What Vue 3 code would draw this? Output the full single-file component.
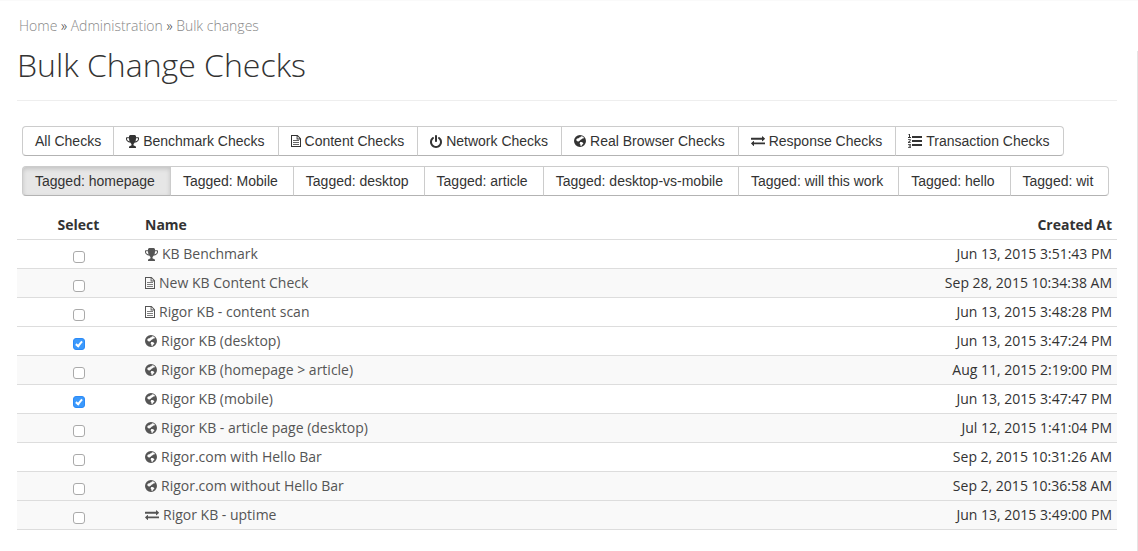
<script setup>
import { ref } from 'vue'

const icons = {
  trophy: {
    w: 13, h: 13, box: '64 128 1664 1536',
    d: 'M522 883q-74-162-74-371h-256v96q0 78 94.5 162t235.5 113zm1078-275v-96h-256q0 209-74 371 141-29 235.5-113t94.5-162zm128-128v128q0 71-41.5 143t-112 130-173 97.5-215.5 44.5q-42 54-95 95-38 34-52.5 72.5t-14.5 89.5q0 54 30.5 91t97.5 37q75 0 133.5 45.5t58.5 114.5v64q0 14-9 23t-23 9h-832q-14 0-23-9t-9-23v-64q0-69 58.5-114.5t133.5-45.5q67 0 97.5-37t30.5-91q0-51-14.5-89.5t-52.5-72.5q-53-41-95-95-113-5-215.5-44.5t-173-97.5-112-130-41.5-143v-128q0-40 28-68t68-28h288v-96q0-66 47-113t113-47h576q66 0 113 47t47 113v96h288q40 0 68 28t28 68z'
  },
  file: {
    w: 10, h: 12, box: '0 0 10 12',
    d: 'M0 0H6.6L10 3.4V12H0ZM1 1V11H9V4.4H5.6V1ZM6.5 1.3V3.5H8.7ZM2 5.3H8V6.1H2ZM2 7.2H8V8H2ZM2 9H8V9.8H2Z'
  },
  power: {
    w: 12, h: 13, box: '128 0 1536 1664',
    d: 'M1664 896q0 156-61 298t-164 245-245 164-298 61-298-61-245-164-164-245-61-298q0-182 80.5-343t226.5-270q43-32 95.5-25t83.5 50q32 42 24.5 94.5t-49.5 84.5q-98 74-151.5 181t-53.5 228q0 104 40.5 198.5t109.5 163.5 163.5 109.5 198.5 40.5 198.5-40.5 163.5-109.5 109.5-163.5 40.5-198.5q0-121-53.5-228t-151.5-181q-42-32-49.5-84.5t24.5-94.5q31-43 84-50t95 25q146 109 226.5 270t80.5 343zm-640-768v640q0 52-38 90t-90 38-90-38-38-90v-640q0-52 38-90t90-38 90 38 38 90z'
  },
  globe: {
    w: 12, h: 12, box: '0 0 12 12',
    d: 'M6 0A6 6 0 1 1 6 12A6 6 0 1 1 6 0ZM7 1.2L8.6 1.6L10 2.8L9.4 3.6L8.4 3.4L7.6 4.2L6.6 4.8L5.8 5.8L4.8 6L4.4 6.8L3.4 6.2L2.4 5.4L2.4 4.2L3.2 3.4L4.6 3.2L5.2 2.4L6.4 2.2ZM6.2 7L7.6 7L9 7.8L9.4 8.6L8.4 9.6L7.6 10.8L6.6 11L6.4 9.6L5.6 8.4Z'
  },
  exchange: {
    w: 14, h: 10, box: '0 256 1792 1376',
    d: 'M1792 1184v192q0 13-9.5 22.5t-22.5 9.5h-1376v192q0 13-9.5 22.5t-22.5 9.5q-12 0-24-10l-319-320q-9-9-9-22 0-14 9-23l320-320q9-9 23-9 13 0 22.5 9.5t9.5 22.5v192h1376q13 0 22.5 9.5t9.5 22.5zm0-544q0 14-9 23l-320 320q-9 9-23 9-13 0-22.5-9.5t-9.5-22.5v-192h-1376q-13 0-22.5-9.5t-9.5-22.5v-192q0-13 9.5-22.5t22.5-9.5h1376v-192q0-14 9-23t23-9q12 0 24 10l319 319q9 9 9 23z'
  },
  list: {
    w: 14, h: 14, box: '0 0 14 14',
    d: 'M4 2H14V4H4ZM4 6H14V8H4ZM4 10H14V12H4ZM1 0H2V3H3V4H0V3H1V1H0.4V0.5ZM0 5H2.6V7L1.2 8.2H2.8V9H0V8L1.8 6.6V5.8H0ZM0 10H2.8V11.6L2.3 12L2.8 12.5V14H0V13.2H1.8V12.4H0.8V11.6H1.8V10.8H0Z'
  }
}

const types = [
  { label: 'All Checks' },
  { label: 'Benchmark Checks', icon: 'trophy' },
  { label: 'Content Checks', icon: 'file' },
  { label: 'Network Checks', icon: 'power' },
  { label: 'Real Browser Checks', icon: 'globe' },
  { label: 'Response Checks', icon: 'exchange' },
  { label: 'Transaction Checks', icon: 'list' }
]

const tags = ['homepage', 'Mobile', 'desktop', 'article', 'desktop-vs-mobile', 'will this work', 'hello', 'wit']
const activeTag = ref('homepage')

const checks = ref([
  { icon: 'trophy', name: 'KB Benchmark', created: 'Jun 13, 2015 3:51:43 PM', selected: false },
  { icon: 'file', name: 'New KB Content Check', created: 'Sep 28, 2015 10:34:38 AM', selected: false, shaded: true },
  { icon: 'file', name: 'Rigor KB - content scan', created: 'Jun 13, 2015 3:48:28 PM', selected: false },
  { icon: 'globe', name: 'Rigor KB (desktop)', created: 'Jun 13, 2015 3:47:24 PM', selected: true },
  { icon: 'globe', name: 'Rigor KB (homepage > article)', created: 'Aug 11, 2015 2:19:00 PM', selected: false, shaded: true },
  { icon: 'globe', name: 'Rigor KB (mobile)', created: 'Jun 13, 2015 3:47:47 PM', selected: true },
  { icon: 'globe', name: 'Rigor KB - article page (desktop)', created: 'Jul 12, 2015 1:41:04 PM', selected: false, shaded: true },
  { icon: 'globe', name: 'Rigor.com with Hello Bar', created: 'Sep 2, 2015 10:31:26 AM', selected: false },
  { icon: 'globe', name: 'Rigor.com without Hello Bar', created: 'Sep 2, 2015 10:36:58 AM', selected: false, shaded: true },
  { icon: 'exchange', name: 'Rigor KB - uptime', created: 'Jun 13, 2015 3:49:00 PM', selected: false, shaded: true }
])
</script>

<template>
  <div class="page">
    <main class="content">
      <nav class="breadcrumb" aria-label="Breadcrumb">
        <a href="#">Home</a> » <a href="#">Administration</a> » <a href="#">Bulk changes</a>
      </nav>
      <h1>Bulk Change Checks</h1>

      <div class="groups">
        <div class="group types">
          <button v-for="t in types" :key="t.label" type="button" class="btn">
            <svg v-if="t.icon" class="icon" :width="icons[t.icon].w" :height="icons[t.icon].h" :viewBox="icons[t.icon].box" preserveAspectRatio="none" aria-hidden="true">
              <path fill-rule="evenodd" :d="icons[t.icon].d" />
            </svg>
            <span>{{ t.label }}</span>
          </button>
        </div>
        <div class="group tags">
          <button v-for="t in tags" :key="t" type="button" class="btn" :class="{ active: t === activeTag }" @click="activeTag = t">Tagged: {{ t }}</button>
        </div>
      </div>

      <table>
        <thead>
          <tr>
            <th class="select">Select</th>
            <th>Name</th>
            <th class="created">Created At</th>
          </tr>
        </thead>
        <tbody>
          <tr v-for="c in checks" :key="c.name" :class="{ shaded: c.shaded }">
            <td class="select"><input v-model="c.selected" type="checkbox" :aria-label="c.name" /></td>
            <td>
              <a href="#" class="name">
                <svg class="icon" :width="icons[c.icon].w" :height="icons[c.icon].h" :viewBox="icons[c.icon].box" preserveAspectRatio="none" aria-hidden="true">
                  <path fill-rule="evenodd" :d="icons[c.icon].d" />
                </svg>
                <span>{{ c.name }}</span>
              </a>
            </td>
            <td class="created">{{ c.created }}</td>
          </tr>
        </tbody>
      </table>
    </main>
    <div class="edge"></div>
  </div>
</template>

<style>
body {
  background: #fff;
}
</style>

<style scoped>
.page {
  box-sizing: border-box;
  display: flex;
  min-height: 100vh;
  border-top: 1px solid #fafafa;
  color: #333;
  font: 14px/20px 'Open Sans', sans-serif;
}
.content {
  flex: 1;
  padding: 15px 20px 20px 17px;
}
.edge {
  width: 1px;
  margin-top: 50px;
  background: #e5e5e5;
}
.breadcrumb {
  padding-left: 2px;
  font-weight: 300;
}
.breadcrumb a {
  color: #888;
  text-decoration: none;
}
h1 {
  margin: 9px 0 25px;
  padding-bottom: 15px;
  border-bottom: 1px solid #eee;
  font-size: 32px;
  line-height: 40px;
  font-weight: 300;
}
.groups {
  display: flex;
  flex-direction: column;
  gap: 10px;
  padding-left: 5px;
}
.group {
  display: flex;
}
.btn {
  display: flex;
  align-items: center;
  gap: 4px;
  margin: 0 0 0 -1px;
  padding: 4px 12px;
  border: 1px solid #ccc;
  border-bottom-color: #b3b3b3;
  background: #fff;
  color: #333;
  font: 14px/20px 'Liberation Sans', Arial, sans-serif;
  white-space: nowrap;
}
.types .btn + .btn {
  padding-right: 13px;
}
.tags .btn {
  padding-right: 15px;
}
.btn:first-child {
  margin-left: 0;
  border-radius: 4px 0 0 4px;
}
.btn:last-child {
  border-radius: 0 4px 4px 0;
}
.btn.active {
  background: #e6e6e6;
  box-shadow: inset 0 2px 4px rgba(0, 0, 0, 0.15);
}
.icon {
  flex: none;
  fill: currentColor;
}
table {
  width: 100%;
  margin-top: 14px;
  border-collapse: collapse;
}
th,
td {
  padding: 4px 5px;
  text-align: left;
  font-weight: 400;
}
th {
  padding-top: 5px;
  font-weight: 700;
}
tbody tr {
  border-top: 1px solid #ddd;
}
tbody tr:last-child {
  border-bottom: 1px solid #ddd;
}
.shaded {
  background: #f9f9f9;
}
.select {
  width: 113px;
  text-align: center;
}
.created {
  text-align: right;
}
.name {
  display: flex;
  align-items: center;
  gap: 4px;
  color: #555;
  text-decoration: none;
}
input {
  appearance: none;
  display: block;
  box-sizing: border-box;
  width: 12px;
  height: 12px;
  margin: 6px auto 0;
  border: 1px solid #aaa;
  border-radius: 3px;
  background: #fff;
}
input:checked {
  border-color: #2b8af7;
  background: #3b99fc;
}
input:checked::after {
  content: '';
  display: block;
  box-sizing: border-box;
  width: 4px;
  height: 7px;
  margin: 1px auto 0;
  border: solid #fff;
  border-width: 0 2px 2px 0;
  transform: rotate(40deg);
}
</style>
